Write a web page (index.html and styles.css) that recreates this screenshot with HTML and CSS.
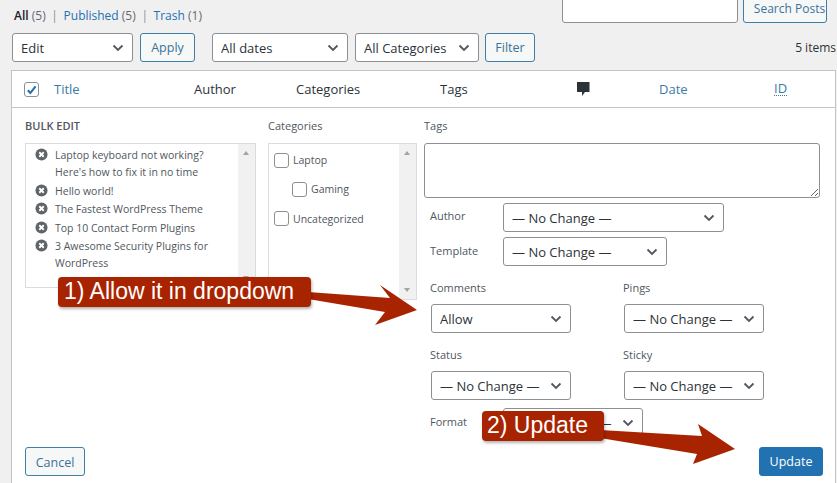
FILE: index.html
```html
<!DOCTYPE html>
<html lang="en">
<head>
    <meta charset="UTF-8">
    <title>Posts - Bulk Edit</title>
    <link rel="stylesheet" href="styles.css">
</head>
<body>
    <svg class="defs" width="0" height="0">
        <symbol id="remove" viewBox="0 0 14 14">
            <circle cx="7" cy="7" r="6.5" fill="#5f6468"/>
            <path d="M4.6 4.6l4.8 4.8M9.4 4.6l-4.8 4.8" stroke="#fff" stroke-width="2"/>
        </symbol>
    </svg>

    <!-- Search row -->
    <div class="top-row">
        <div class="views">
            <b>All</b> <span class="count">(5)</span> <span class="sep">|</span>
            <a href="#">Published</a> <span class="count">(5)</span> <span class="sep">|</span>
            <a href="#">Trash</a> <span class="count">(1)</span>
        </div>
        <div class="search">
            <input class="search-input" type="text">
            <button class="btn search-btn">Search Posts</button>
        </div>
    </div>

    <!-- Bulk actions and filters -->
    <div class="toolbar">
        <select class="w-edit"><option>Edit</option></select>
        <button class="btn apply-btn">Apply</button>
        <select class="w-dates"><option>All dates</option></select>
        <select class="w-cats"><option>All Categories</option></select>
        <button class="btn filter-btn">Filter</button>
        <span class="items">5 items</span>
    </div>

    <div class="panel">
        <div class="head">
            <span class="head-check">
                <svg width="14" height="14" viewBox="0 0 14 14"><path d="M3 7.2l2.8 3L11.4 3" fill="none" stroke="#2271b1" stroke-width="2.2"/></svg>
            </span>
            <a href="#">Title</a>
            <span>Author</span>
            <span>Categories</span>
            <span>Tags</span>
            <span>
                <svg class="comment-icon" width="14" height="16" viewBox="0 0 14 16"><path d="M1 1h12.5v10H9l-3 4v-4H1z" fill="#2c3338"/></svg>
            </span>
            <a href="#">Date</a>
            <a href="#" class="id-col">ID</a>
        </div>

        <div class="edit">
            <div class="edit-grid">
                <div>
                    <div class="title">BULK EDIT</div>
                    <div class="box posts-box">
                        <ul class="posts">
                            <li><svg width="14" height="14"><use href="#remove"/></svg>Laptop keyboard not working? Here's how to fix it in no time</li>
                            <li><svg width="14" height="14"><use href="#remove"/></svg>Hello world!</li>
                            <li><svg width="14" height="14"><use href="#remove"/></svg>The Fastest WordPress Theme</li>
                            <li><svg width="14" height="14"><use href="#remove"/></svg>Top 10 Contact Form Plugins</li>
                            <li><svg width="14" height="14"><use href="#remove"/></svg>3 Awesome Security Plugins for WordPress</li>
                        </ul>
                        <div class="scrollbar"><i class="up"></i><i class="down"></i></div>
                    </div>
                </div>
                <div>
                    <div class="label">Categories</div>
                    <div class="box cats-box">
                        <ul class="cats">
                            <li><span class="check"></span>Laptop</li>
                            <li class="child"><span class="check"></span>Gaming</li>
                            <li><span class="check"></span>Uncategorized</li>
                        </ul>
                        <div class="scrollbar"><i class="up"></i><i class="down"></i></div>
                    </div>
                </div>
                <div>
                    <div class="label">Tags</div>
                    <textarea class="tags"></textarea>
                    <div class="field-row first">
                        <span class="field-label">Author</span>
                        <select class="w-author"><option>— No Change —</option></select>
                    </div>
                    <div class="field-row">
                        <span class="field-label">Template</span>
                        <select class="w-format"><option>— No Change —</option></select>
                    </div>
                    <div class="pairs">
                        <div>
                            <div class="label">Comments</div>
                            <select class="w-pair"><option>Allow</option></select>
                        </div>
                        <div>
                            <div class="label">Pings</div>
                            <select class="w-pair"><option>— No Change —</option></select>
                        </div>
                        <div>
                            <div class="label">Status</div>
                            <select class="w-pair"><option>— No Change —</option></select>
                        </div>
                        <div>
                            <div class="label">Sticky</div>
                            <select class="w-pair"><option>— No Change —</option></select>
                        </div>
                    </div>
                    <div class="field-row format-row">
                        <span class="field-label">Format</span>
                        <select class="w-format"><option>— No Change —</option></select>
                    </div>
                </div>
            </div>
            <div class="edit-foot">
                <button class="btn cancel-btn">Cancel</button>
                <button class="btn update-btn">Update</button>
            </div>
        </div>
    </div>

    <!-- Annotations drawn over the screenshot -->
    <svg class="arrows" width="837" height="483" viewBox="0 0 837 483">
        <path d="M308 292L390 298L380 285L417 310L375 325L385 312L308 299z" fill="#a82400"/>
        <path d="M600 430L702 436L698 424L735 449L693 464L697 454L600 438z" fill="#a82400"/>
    </svg>
    <div class="callout callout-one">1) Allow it in dropdown</div>
    <div class="callout callout-two">2) Update</div>
</body>
</html>
```

FILE: styles.css
```css
* {
    box-sizing: border-box;
}
html, body {
    height: 483px;
    overflow: hidden;
}
body {
    position: relative;
    margin: 0;
    background: #f0f0f1;
    color: #2c3338;
    font-family: "Open Sans", Arial, sans-serif;
    font-size: 12.5px;
}
a {
    color: #2271b1;
    text-decoration: none;
}
.defs {
    display: none;
}
select {
    appearance: none;
    height: 29px;
    padding: 0 24px 0 8px;
    border: 1px solid #8c8f94;
    border-radius: 3px;
    color: #2c3338;
    font-family: inherit;
    font-size: 13px;
    background: #fff url("data:image/svg+xml,%3Csvg xmlns='http://www.w3.org/2000/svg' width='12' height='8'%3E%3Cpath d='M1.5 1.5L6 6l4.5-4.5' fill='none' stroke='%2350575e' stroke-width='1.8'/%3E%3C/svg%3E") no-repeat right 8px center;
}
.btn {
    height: 29px;
    padding: 0;
    border: 1px solid #3f7ea6;
    border-radius: 3px;
    background: #f6f7f7;
    color: #3a7399;
    font-family: inherit;
    font-size: 12.5px;
}

/* Top rows */
.top-row {
    display: flex;
    justify-content: space-between;
    align-items: flex-end;
    height: 23px;
    margin-bottom: 10px;
    padding: 0 10px 0 14px;
}
.views {
    align-self: flex-start;
    padding-top: 7px;
    font-size: 12px;
    line-height: 17px;
    color: #50575e;
}
.views b {
    font-weight: 600;
    color: #1d2327;
}
.count {
    color: #646970;
}
.sep {
    margin: 0 2.5px;
    color: #8c8f94;
}
.search {
    display: flex;
    align-items: flex-end;
    gap: 5px;
}
.search-input {
    width: 176px;
    height: 30px;
    border: 1px solid #8c8f94;
    border-radius: 3px;
    background: #fff;
}
.search-btn {
    width: 84px;
    height: 30px;
    padding-left: 9px;
    font-size: 12px;
    white-space: nowrap;
}
.toolbar {
    display: flex;
    align-items: center;
    height: 29px;
    margin-bottom: 8px;
    padding: 0 1px 0 12px;
}
.w-edit {
    width: 121px;
}
.apply-btn {
    width: 55px;
    margin: 0 17px 0 7px;
}
.w-dates {
    width: 136px;
    margin-right: 7px;
}
.w-cats {
    width: 124px;
    margin-right: 6px;
}
.filter-btn {
    width: 50px;
}
.items {
    margin-left: auto;
    font-size: 12px;
}

/* Table panel */
.panel {
    margin: 0 1px 0 11px;
    border: 1px solid #c3c4c7;
    border-bottom: none;
    background: #fff;
}
.head {
    display: grid;
    grid-template-columns: 42px 140px 102px 144px 136px 83px 115px 1fr;
    align-items: center;
    height: 37px;
    border-bottom: 1px solid #c3c4c7;
    font-size: 13px;
}
.head a {
    color: #3a7ba5;
}
.head-check {
    display: flex;
    width: 15px;
    height: 15px;
    margin-left: 12px;
    border: 1px solid #8c8f94;
    border-radius: 3px;
    background: #fff;
}
.comment-icon {
    display: block;
}
.id-col {
    justify-self: start;
    border-bottom: 1px dotted #3a7ba5;
    line-height: 13px;
}

/* Bulk edit form */
.edit {
    padding: 9px 12px 7px 13px;
}
.edit-grid {
    display: grid;
    grid-template-columns: 231px 149px 396px;
    column-gap: 12px;
}
.edit-grid > :last-child {
    margin-left: -5px;
}
.title {
    height: 26px;
    font-size: 11px;
    font-weight: 600;
    line-height: 17px;
    color: #50575e;
}
.label {
    height: 26px;
    font-size: 11px;
    line-height: 17px;
    color: #50575e;
}
.box {
    display: flex;
    justify-content: space-between;
    border: 1px solid #dcdcde;
    background: #fff;
    font-size: 10.5px;
    color: #50575e;
}
.posts-box {
    height: 145px;
}
.cats-box {
    height: 157px;
}
.posts, .cats {
    margin: 0;
    padding: 0;
    list-style: none;
}
.posts {
    padding: 3px 0 0 9px;
    line-height: 17px;
}
.posts li {
    position: relative;
    width: 190px;
    margin-bottom: 1.6px;
    padding-left: 20px;
}
.posts svg {
    position: absolute;
    left: 0;
    top: 1px;
    width: 13px;
    height: 13px;
}
.cats {
    padding: 7px 0 0 5px;
}
.cats li {
    display: flex;
    align-items: center;
    height: 18px;
    margin-bottom: 11.3px;
}
.cats .child {
    padding-left: 18px;
}
.check {
    width: 15px;
    height: 15px;
    margin-right: 4px;
    border: 1px solid #8c8f94;
    border-radius: 3px;
}
.scrollbar {
    position: relative;
    flex: none;
    width: 17px;
    background: #f1f1f1;
}
.scrollbar i {
    position: absolute;
    left: 5px;
    border-left: 3px solid transparent;
    border-right: 3px solid transparent;
}
.scrollbar .up {
    top: 7px;
    border-bottom: 4px solid #a3a3a3;
}
.scrollbar .down {
    bottom: 7px;
    border-top: 4px solid #a3a3a3;
}
.tags {
    display: block;
    width: 396px;
    height: 55px;
    border: 1px solid #8c8f94;
    border-radius: 3px;
    background: #fff;
}
.field-row {
    display: flex;
    align-items: center;
    margin-top: 5px;
    padding-left: 6px;
}
.field-label {
    flex: none;
    width: 73px;
    margin-top: -3px;
    font-size: 11px;
    color: #50575e;
}
.first .field-label {
    margin-top: -4px;
}
.w-author {
    width: 221px;
}
.w-format {
    width: 164px;
}
.format-row .w-format {
    width: 140px;
}
.format-row {
    margin-top: 8px;
}
.format-row .field-label {
    margin-top: -2px;
}
.pairs {
    display: grid;
    grid-template-columns: 193px 140px;
    padding-left: 6px;
}
.pairs > div {
    margin-top: 13px;
}
.pairs .label {
    height: 25px;
}
.w-pair {
    width: 140px;
    margin-left: 1px;
}
.edit-foot {
    display: flex;
    justify-content: space-between;
    margin-top: 10px;
}
.cancel-btn {
    width: 60px;
    padding-top: 2px;
}
.update-btn {
    width: 64px;
    border-color: #2271b1;
    background: #2271b1;
    color: #fff;
}

/* Annotations */
.arrows {
    position: absolute;
    left: 0;
    top: 0;
    pointer-events: none;
}
.callout {
    position: absolute;
    padding-left: 6px;
    border-radius: 4px;
    background: #a82400;
    color: #fff;
    font-family: "Liberation Sans", Arial, sans-serif;
    font-size: 23px;
    box-shadow: 1px 2px 3px rgba(0, 0, 0, .3);
}
.callout-one {
    left: 58px;
    top: 277px;
    width: 253px;
    height: 30px;
    line-height: 28px;
}
.callout-two {
    left: 482px;
    top: 411px;
    width: 122px;
    height: 30px;
    padding-left: 5px;
    line-height: 28px;
}
```
